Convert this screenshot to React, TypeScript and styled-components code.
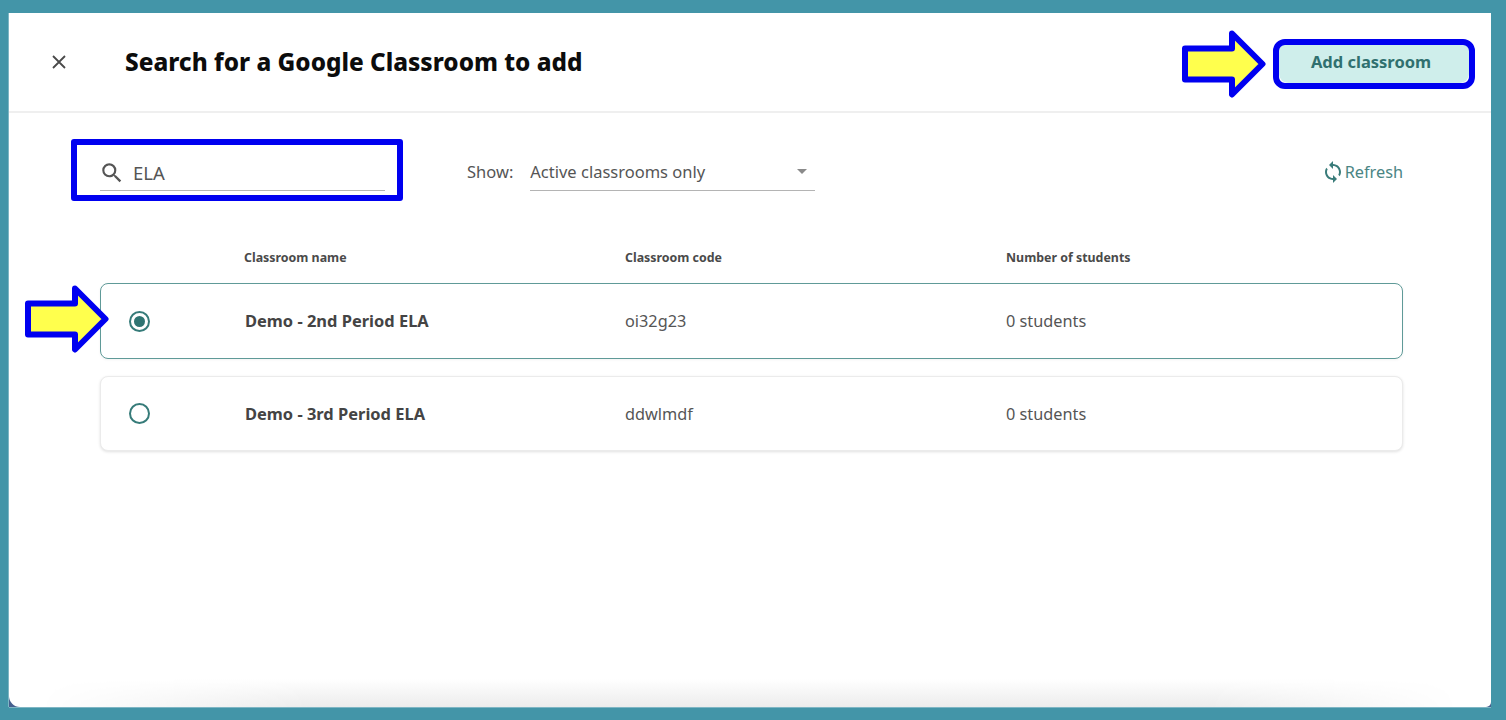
import React from "react";
import styled, { createGlobalStyle } from "styled-components";

const Global = createGlobalStyle`
  html, body { margin: 0; padding: 0; background: #4395a8; }
  body { font-family: "Noto Sans", "Open Sans", sans-serif; }
  * { box-sizing: border-box; }
`;

const Page = styled.div`
  width: 1506px;
  height: 720px;
  padding: 13px 15px 13px 9px;
  overflow: hidden;
`;

const PanelBacking = styled.div`
  height: 100%;
  background: #46608f;
  box-shadow: 0 1px 0 #7fb6c4, -1px 0 0 #7fb6c4;
`;

const Panel = styled.main`
  position: relative;
  height: 100%;
  background: #fff;
  border-radius: 0 0 5px 11px;
  overflow: hidden;
  &::after {
    content: "";
    position: absolute;
    left: 0;
    right: 0;
    bottom: 0;
    height: 28px;
    background: linear-gradient(to top, #ececec, #ffffff);
    mask-image: linear-gradient(to right, transparent 30px, #000 300px, #000 1200px, transparent 1450px);
    pointer-events: none;
  }
`;

const Header = styled.header`
  display: flex;
  align-items: center;
  height: 100px;
  padding: 0 22px 0 41px;
  border-bottom: 2px solid #efefef;
`;

const CloseButton = styled.button`
  display: flex;
  width: 18px;
  height: 18px;
  padding: 0;
  margin-right: 57px;
  border: 0;
  background: none;
  color: #4a4a4a;
`;

const Title = styled.h1`
  flex: 1;
  margin: 0;
  font-size: 24.3px;
  line-height: 30px;
  font-weight: 800;
  color: #0c0c0c;
`;

const AddButton = styled.button`
  width: 190px;
  height: 42px;
  padding: 0 6px 2px 0;
  border: 0;
  border-radius: 9px;
  background: #cfeeeb;
  color: #30706f;
  font: 700 16.5px "Noto Sans", sans-serif;
`;

const Highlight = styled.span<{ $top: number; $left: number; $width: number; $height: number; $radius: number }>`
  position: absolute;
  top: ${(p) => p.$top}px;
  left: ${(p) => p.$left}px;
  width: ${(p) => p.$width}px;
  height: ${(p) => p.$height}px;
  border: 6px solid #0000f0;
  border-radius: ${(p) => p.$radius}px;
  pointer-events: none;
`;

const ArrowMark = styled.svg<{ $top: number; $left: number }>`
  position: absolute;
  top: ${(p) => p.$top}px;
  left: ${(p) => p.$left}px;
  z-index: 2;
`;

const Toolbar = styled.section`
  display: flex;
  align-items: flex-end;
  height: 78px;
  padding: 0 88px 0 91px;
`;

const SearchField = styled.label`
  display: flex;
  align-items: center;
  width: 285px;
  height: 38px;
  padding-top: 2px;
  border-bottom: 1px solid #b4b4b4;
  color: #555;
  font-size: 18.5px;
  svg {
    margin-left: -1px;
  }
`;

const SearchText = styled.span`
  margin-left: 8px;
  color: #555;
`;

const ShowLabel = styled.span`
  margin-left: 82px;
  margin-right: 17px;
  height: 38px;
  line-height: 37px;
  font-size: 16.5px;
  color: #555;
`;

const SelectField = styled.div`
  display: flex;
  align-items: center;
  justify-content: space-between;
  width: 285px;
  height: 38px;
  padding-right: 8px;
  border-bottom: 1px solid #b4b4b4;
  font-size: 16.5px;
  color: #555;
`;

const Caret = styled.span`
  width: 0;
  height: 0;
  border-left: 5px solid transparent;
  border-right: 5px solid transparent;
  border-top: 5px solid #8a8a8a;
`;

const RefreshButton = styled.button`
  display: flex;
  align-items: center;
  height: 38px;
  margin-left: auto;
  padding: 0;
  border: 0;
  background: none;
  color: #4a8584;
  font: 400 16.3px "Noto Sans", sans-serif;
`;

const Table = styled.section`
  padding: 0 88px 0 91px;
`;

const ColumnHeads = styled.div`
  display: grid;
  grid-template-columns: 144px 381px 381px 1fr;
  margin-top: 58px;
  height: 34px;
  font-size: 12.4px;
  font-weight: 700;
  line-height: 18px;
  color: #4a4a4a;
`;

const Row = styled.div<{ $selected?: boolean }>`
  display: grid;
  grid-template-columns: 144px 380px 381px 1fr;
  align-items: center;
  height: ${(p) => (p.$selected ? 76 : 75)}px;
  margin-bottom: 17px;
  border: 1px solid ${(p) => (p.$selected ? "#5f9a98" : "#ebebeb")};
  border-radius: 8px;
  background: #fff;
  box-shadow: 0 1px 3px rgba(0, 0, 0, ${(p) => (p.$selected ? 0.05 : 0.12)});
  font-size: 16.3px;
  line-height: 22px;
  color: #555;
`;

const RadioCell = styled.div`
  padding-left: 28px;
  display: flex;
`;

const Radio = styled.span<{ $on?: boolean }>`
  display: flex;
  align-items: center;
  justify-content: center;
  width: 21px;
  height: 21px;
  border: 2px solid #367b79;
  border-radius: 50%;
  &::before {
    content: "";
    display: ${(p) => (p.$on ? "block" : "none")};
    width: 11px;
    height: 11px;
    border-radius: 50%;
    background: #2f7472;
  }
`;

const NameCell = styled.div`
  font-weight: 700;
  font-size: 16.45px;
  color: #444;
`;

const Cell = styled.div``;

const rows = [
  { name: "Demo - 2nd Period ELA", code: "oi32g23", students: "0 students", selected: true },
  { name: "Demo - 3rd Period ELA", code: "ddwlmdf", students: "0 students", selected: false },
];

const Arrow = ({ top, left }: { top: number; left: number }) => (
  <ArrowMark $top={top} $left={left} width="86" height="68" viewBox="0 0 86 68">
    <path
      d="M3 18.5H50V3.5L80.5 34 50 64.5V49.5H3Z"
      fill="#ffff4d"
      stroke="#0000f0"
      strokeWidth="6"
      strokeLinejoin="round"
    />
  </ArrowMark>
);

export default function App() {
  return (
    <Page>
      <Global />
      <PanelBacking>
        <Panel>
          <Header>
            <CloseButton aria-label="Close">
              <svg width="18" height="18" viewBox="0 0 18 18">
                <path d="M3 3l12 12M15 3L3 15" stroke="currentColor" strokeWidth="1.8" fill="none" />
              </svg>
            </CloseButton>
            <Title>Search for a Google Classroom to add</Title>
            <AddButton>Add classroom</AddButton>
          </Header>
          <Highlight $top={26} $left={1264} $width={202} $height={50} $radius={12} />
          <Arrow top={17} left={1173} />
          <Toolbar>
            <SearchField>
              <svg width="26" height="26" viewBox="0 0 24 24" fill="#555">
                <path d="M15.5 14h-.79l-.28-.27A6.47 6.47 0 0 0 16 9.5 6.5 6.5 0 1 0 9.5 16c1.61 0 3.09-.59 4.23-1.57l.27.28v.79l5 4.99L20.49 19l-4.99-5zm-6 0C7.01 14 5 11.99 5 9.5S7.01 5 9.5 5 14 7.01 14 9.5 11.99 14 9.5 14z" />
              </svg>
              <SearchText>ELA</SearchText>
            </SearchField>
            <ShowLabel>Show:</ShowLabel>
            <SelectField>
              <span>Active classrooms only</span>
              <Caret />
            </SelectField>
            <RefreshButton>
              <svg width="24" height="24" viewBox="0 0 24 24" fill="#3a7c7a">
                <path d="M12 4V1L8 5l4 4V6c3.31 0 6 2.69 6 6 0 1.01-.25 1.97-.7 2.8l1.46 1.46A7.93 7.93 0 0 0 20 12c0-4.42-3.58-8-8-8zm0 14c-3.31 0-6-2.69-6-6 0-1.01.25-1.97.7-2.8L5.24 7.74A7.93 7.93 0 0 0 4 12c0 4.42 3.58 8 8 8v3l4-4-4-4v3z" />
              </svg>
              Refresh
            </RefreshButton>
          </Toolbar>
          <Highlight $top={126} $left={62} $width={332} $height={62} $radius={3} />
          <Table>
            <ColumnHeads>
              <span />
              <span>Classroom name</span>
              <span>Classroom code</span>
              <span>Number of students</span>
            </ColumnHeads>
            {rows.map((r) => (
              <Row key={r.name} $selected={r.selected}>
                <RadioCell>
                  <Radio $on={r.selected} />
                </RadioCell>
                <NameCell>{r.name}</NameCell>
                <Cell>{r.code}</Cell>
                <Cell>{r.students}</Cell>
              </Row>
            ))}
          </Table>
          <Arrow top={272} left={16} />
        </Panel>
      </PanelBacking>
    </Page>
  );
}
